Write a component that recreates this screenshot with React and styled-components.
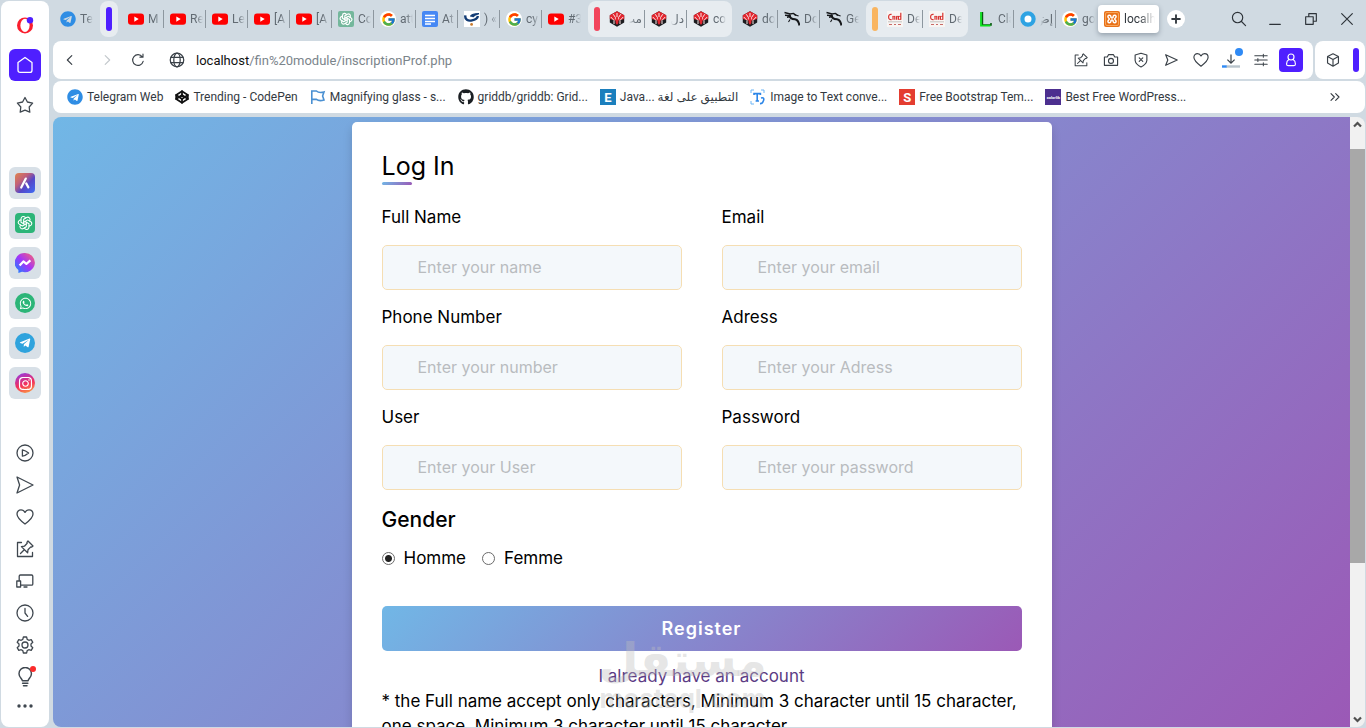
import React, { useState } from 'react';
import styled, { createGlobalStyle } from 'styled-components';
import { FaTelegram, FaTelegramPlane, FaGithub, FaWhatsapp, FaInstagram } from 'react-icons/fa';
import { FcGoogle } from 'react-icons/fc';
import { TbBrandOpenai } from 'react-icons/tb';
import { FiCodepen } from 'react-icons/fi';

const GlobalStyle = createGlobalStyle`
  * {
    box-sizing: border-box;
  }

  body {
    margin: 0;
    font-family: Roboto, 'DejaVu Sans', sans-serif;
    font-size: 12px;
    color: #33393f;
  }

  button {
    border: 0;
    padding: 0;
    background: none;
    color: inherit;
    font: inherit;
  }

  svg {
    display: block;
    flex: none;
  }
`;

const Browser = styled.div`
  display: flex;
  gap: 4px;
  height: 100vh;
  padding: 1px;
  background: #d0dae2;
  overflow: hidden;
`;

/* ---------- sidebar ---------- */

const Sidebar = styled.nav`
  display: flex;
  flex-direction: column;
  align-items: center;
  flex: none;
  width: 48px;
  padding: 8px 0;
  background: #fff;
  border-radius: 8px;
`;

const SideGroup = styled.div`
  display: flex;
  flex-direction: column;
  gap: ${(props) => props.$gap || 0}px;
  margin-top: ${(props) => props.$top || 0};
`;

const SideButton = styled.button`
  display: flex;
  align-items: center;
  justify-content: center;
  position: relative;
  width: 32px;
  height: ${(props) => (props.$short ? 26 : 32)}px;
  border-radius: 6px;
  background: ${(props) => props.$bg || 'transparent'};
  color: ${(props) => props.$color || '#3f474f'};
`;

const AppTile = styled.span`
  display: flex;
  align-items: center;
  justify-content: center;
  width: 20px;
  height: 20px;
  border-radius: ${(props) => (props.$round ? 10 : 4)}px;
  background: ${(props) => props.$bg};
  color: #fff;
`;

const RedDot = styled.span`
  position: absolute;
  top: 5px;
  right: 5px;
  width: 6px;
  height: 6px;
  border-radius: 3px;
  background: #fa2b2b;
`;

/* ---------- tabs ---------- */

const Main = styled.div`
  display: flex;
  flex-direction: column;
  flex: 1;
  min-width: 0;
`;

const TabStrip = styled.div`
  display: flex;
  align-items: center;
  gap: 4px;
  flex: none;
  height: 36px;
  margin-bottom: 4px;
  padding-left: 1px;
`;

const TabRun = styled.div`
  display: flex;
  align-items: center;
`;

const TabGroup = styled.div`
  display: flex;
  align-items: center;
  height: 36px;
  padding: 0 ${(props) => (props.$closed ? 6 : 3)}px 0 6px;
  gap: 3px;
  border-radius: 8px;
  background: #e7ecf0;
`;

const GroupMark = styled.span`
  width: 6px;
  height: 24px;
  border-radius: 3px;
  background: ${(props) => props.$color};
`;

const TabButton = styled.button`
  display: flex;
  align-items: center;
  gap: 4px;
  width: 42px;
  height: 18px;
  padding-left: 6px;
  border-right: 1px solid ${(props) => (props.$last ? 'transparent' : '#8d979f')};
  color: #626b73;
`;

const ActiveTab = styled(TabButton)`
  width: 61px;
  height: 28px;
  padding-right: 2px;
  border: 0;
  border-radius: 4px;
  background: #fff;
  color: #33393f;
  box-shadow: 0 2px 5px rgba(60, 75, 90, 0.4);
`;

const TabText = styled.span`
  flex: 1;
  min-width: 0;
  overflow: hidden;
  white-space: nowrap;
  text-align: left;
  line-height: 18px;
  direction: ${(props) => (props.$rtl ? 'rtl' : 'ltr')};
  margin-right: 2px;
  mask-image: linear-gradient(
    to ${(props) => (props.$rtl ? 'left' : 'right')},
    #000 50%,
    transparent
  );
`;

const GoogleDisc = styled.span`
  display: flex;
  align-items: center;
  justify-content: center;
  width: 16px;
  height: 16px;
  flex: none;
  border-radius: 8px;
  background: #fff;
`;

const GreenTile = styled(AppTile)`
  width: 16px;
  height: 16px;
  flex: none;
  border-radius: 2px;
`;

const NewTab = styled.button`
  display: flex;
  align-items: center;
  justify-content: center;
  width: 18px;
  height: 18px;
  margin-left: 4px;
  border-radius: 9px;
  background: #fff;
`;

const WindowButtons = styled.div`
  display: flex;
  margin-left: auto;
`;

const WindowButton = styled.button`
  display: flex;
  align-items: center;
  justify-content: center;
  width: 36px;
  height: 36px;
  color: #2d3339;
`;

/* ---------- address bar ---------- */

const BarRow = styled.div`
  display: flex;
  gap: 2px;
  flex: none;
  height: 38px;
  margin-bottom: 2px;
`;

const AddressBar = styled.div`
  display: flex;
  align-items: center;
  flex: 1;
  min-width: 0;
  padding: 0 7px 0 2px;
  background: #fff;
  border-radius: 8px;
`;

const BarButton = styled.button`
  display: flex;
  align-items: center;
  justify-content: center;
  position: relative;
  flex: none;
  width: ${(props) => props.$w || 30}px;
  height: 30px;
  color: ${(props) => props.$color || '#3a4148'};
`;

const AddressBox = styled.div`
  display: flex;
  align-items: center;
  flex: 1;
  min-width: 0;
  gap: 4px;
  margin-left: 15px;
`;

const Url = styled.div`
  flex: 1;
  font-size: 13px;
  color: #7b848b;
  white-space: nowrap;
  overflow: hidden;

  b {
    font-weight: 400;
    color: #111;
  }
`;

const Profile = styled.span`
  display: flex;
  align-items: center;
  justify-content: center;
  width: 24px;
  height: 24px;
  border-radius: 4px;
  background: #4f1fff;
  color: #fff;
`;

const BlueDot = styled.span`
  position: absolute;
  top: 3px;
  right: 3px;
  width: 8px;
  height: 8px;
  border-radius: 4px;
  background: #2f8af5;
`;

const SideBox = styled.div`
  display: flex;
  align-items: center;
  justify-content: space-between;
  width: 50px;
  padding: 0 6px 0 3px;
  background: #fff;
  border-radius: 8px;
`;

/* ---------- bookmarks ---------- */

const Bookmarks = styled.div`
  display: flex;
  align-items: center;
  gap: 12px;
  flex: none;
  height: 32px;
  margin-bottom: 4px;
  padding: 0 24px 0 14px;
  background: #fff;
  border-radius: 8px;
`;

const Bookmark = styled.a`
  display: flex;
  align-items: center;
  gap: 4px;
  color: #33393f;
  text-decoration: none;
  white-space: nowrap;
`;

const LetterTile = styled.span`
  display: flex;
  align-items: center;
  justify-content: center;
  width: 16px;
  height: 16px;
  background: ${(props) => props.$bg};
  color: #fff;
  font-size: ${(props) => (props.$tiny ? 4 : 13)}px;
  font-weight: 700;
`;

const More = styled.button`
  margin-left: auto;
`;

/* ---------- page ---------- */

const Viewport = styled.div`
  display: flex;
  flex: 1;
  min-height: 0;
  border-radius: 8px;
  overflow: hidden;
`;

const Page = styled.main`
  flex: 1;
  padding: 5px 10px;
  overflow: hidden;
  background: linear-gradient(135deg, #71b7e6, #9b59b6);
  font-family: Inter, 'Open Sans', sans-serif;
  color: #000;
`;

const Card = styled.div`
  position: relative;
  max-width: 700px;
  margin: 0 auto;
  padding: 25px 30px;
  background: #fff;
  border-radius: 5px;
  box-shadow: 0 5px 10px rgba(0, 0, 0, 0.15);
`;

const Title = styled.h1`
  position: relative;
  margin: 0 0 20px;
  font-size: 25px;
  font-weight: 400;
  line-height: 38px;

  &::before {
    content: '';
    position: absolute;
    left: 0;
    bottom: 0;
    width: 30px;
    height: 3px;
    border-radius: 5px;
    background: linear-gradient(135deg, #71b7e6, #9b59b6);
  }
`;

const Fields = styled.div`
  display: grid;
  grid-template-columns: 1fr 1fr;
  gap: 15px 40px;
`;

const Field = styled.div`
  label {
    display: block;
    margin-bottom: 16px;
    font-size: 17px;
    font-weight: 400;
    line-height: 24px;
  }

  input {
    display: block;
    width: 100%;
    height: 45px;
    padding: 0 15px 2px 35px;
    border: 1px solid #f5deb3;
    border-radius: 5px;
    outline: none;
    background: #f4f8fb;
    font-family: inherit;
    font-size: 16px;
  }

  input::placeholder {
    color: #b9bcbf;
    opacity: 1;
  }
`;

const Gender = styled.fieldset`
  margin: 15px 0 0;
  padding: 0;
  border: 0;

  legend {
    padding: 0;
    font-size: 21px;
    font-weight: 500;
    line-height: 30px;
  }
`;

const Radios = styled.div`
  display: flex;
  gap: 16px;
  margin-top: 11px;

  label {
    display: flex;
    align-items: center;
    gap: 9px;
    font-size: 17px;
    line-height: 24px;
  }

  input {
    width: 13px;
    height: 13px;
    margin: 0;
    appearance: none;
    border: 1px solid #6b6b6b;
    border-radius: 7px;
    background: #fff;
  }

  input:checked {
    background: radial-gradient(circle, #222 0 3px, #fff 4px);
  }
`;

const Register = styled.button`
  display: block;
  width: 100%;
  height: 45px;
  margin: 36px 0 13px;
  border-radius: 5px;
  background: linear-gradient(135deg, #71b7e6, #9b59b6);
  color: #fff;
  font-size: 18px;
  font-weight: 600;
  letter-spacing: 1px;
`;

const LoginLink = styled.a`
  display: block;
  text-align: center;
  font-size: 17px;
  line-height: 25px;
  color: #5b3b84;
  text-decoration: none;
`;

const Rules = styled.p`
  margin: 0;
  font-size: 17px;
  line-height: 25px;
`;

const Watermark = styled.div`
  position: absolute;
  top: 510px;
  left: 0;
  right: 0;
  padding-right: 38px;
  text-align: center;
  font-weight: 700;
  color: rgba(190, 190, 190, 0.4);
  pointer-events: none;

  strong {
    display: block;
    font-family: 'DejaVu Sans', sans-serif;
    font-size: 46px;
    line-height: 56px;
  }

  span {
    display: block;
    font-size: 26px;
    line-height: 22px;
  }
`;

const ScrollBar = styled.div`
  display: flex;
  flex-direction: column;
  align-items: center;
  width: 15px;
  padding: 4px 0;
  background: #f1f1f1;
  color: #505050;
`;

const ScrollTrack = styled.div`
  flex: 1;
  width: 100%;
  padding-top: 21px;
`;

const ScrollThumb = styled.div`
  height: 73%;
  background: #a8a8a8;
`;

/* ---------- icons ---------- */

const Line = ({ size = 18, sw = 1.3, children }) => (
  <svg
    width={size}
    height={size}
    viewBox="0 0 18 18"
    fill="none"
    stroke="currentColor"
    strokeWidth={sw}
    strokeLinecap="round"
    strokeLinejoin="round"
    aria-hidden="true"
  >
    {children}
  </svg>
);

const heartPath = 'M9 16 C5.5 13.4 1 10 1 6 C1 3.4 2.8 1.8 5 1.8 C6.8 1.8 8.2 2.8 9 4.4 C9.8 2.8 11.2 1.8 13 1.8 C15.2 1.8 17 3.4 17 6 C17 10 12.5 13.4 9 16 Z';

const PinIcon = ({ size }) => (
  <Line size={size}>
    <path d="M5.5 2.5H1.5V16.5H16.5V12.5M4.5 13.5L8 10M12 1L17 6L15.5 7.2L14.8 6.9L12 9.8L11.6 12.8L5.4 6.6L8.4 6.2L11.2 3.3L10.9 2.4Z" />
  </Line>
);

const HeartIcon = ({ size }) => (
  <Line size={size}>
    <path d={heartPath} />
  </Line>
);

const OperaIcon = () => (
  <svg width="18" height="18" viewBox="0 0 18 18" aria-hidden="true">
    <circle cx="9" cy="9.4" r="8" fill="#fa1e2d" />
    <ellipse cx="9" cy="9.4" rx="4.6" ry="6.6" fill="#fff" />
    <circle cx="14" cy="4.2" r="3.2" fill="#4f1fff" />
  </svg>
);

const YoutubeIcon = () => (
  <svg width="16" height="16" viewBox="0 0 16 16" aria-hidden="true">
    <rect y="2.4" width="16" height="11.4" rx="3" fill="#f00" />
    <path d="M6.3 5.5L10.7 8.1L6.3 10.7Z" fill="#fff" />
  </svg>
);

const GoogleIcon = () => (
  <GoogleDisc>
    <FcGoogle size={15} />
  </GoogleDisc>
);

const OpenaiIcon = () => (
  <GreenTile $bg="#74b79c">
    <TbBrandOpenai size={14} />
  </GreenTile>
);

const DocsIcon = () => (
  <svg width="16" height="16" viewBox="0 0 16 16" aria-hidden="true">
    <rect width="16" height="16" rx="2" fill="#4688f4" />
    <path d="M3 4.5H13M3 7.5H13M3 10.5H13M3 13H9" stroke="#fff" strokeWidth="1.3" />
  </svg>
);

const BubbleIcon = () => (
  <svg width="16" height="16" viewBox="0 0 16 16" aria-hidden="true">
    <rect width="16" height="16" fill="#fff" />
    <path d="M1.4 4.4C.6 8.6 4 10.2 8 9.4C11.4 8.8 13.4 7.2 14 5" fill="none" stroke="#123c75" strokeWidth="2.4" />
    <path d="M6.4 5.4C7.4 3.6 10 2.6 15 2.6C12 3.4 10 4.6 8.6 6" stroke="#123c75" strokeWidth="1.2" fill="#123c75" />
    <circle cx="7.6" cy="13.4" r="1.4" fill="#c8792c" />
  </svg>
);

const SpiderIcon = () => (
  <svg width="16" height="16" viewBox="0 0 16 16" aria-hidden="true">
    <path d="M8 .3L15.2 4.2V11.6L8 15.7L.8 11.6V4.2Z" fill="#1c1c1f" />
    <path d="M8 .3L15.2 4.2V8L8 10L.8 8V4.2Z" fill="#e3262f" />
    <path d="M4.2 3.2L6.4 6.4V8.6M11.8 3.2L9.6 6.4V8.6M8 2V6M1.8 6L5 9.4V13M14.2 6L11 9.4V13" stroke="#fbe6e6" strokeWidth="1" fill="none" />
    <path d="M6.6 7.4H9.4V12L8 14L6.6 12Z" fill="#e3262f" />
  </svg>
);

const DragonIcon = () => (
  <svg width="16" height="16" viewBox="0 0 16 16" fill="none" stroke="#15171a" aria-hidden="true">
    <path d="M.5 1.5L6 3L9.5 2.4L12 4.4M1 4.2L6 4.6M3 6.2L7 5.4" strokeWidth="1.4" />
    <path d="M6 3.6C5 7 8 8 11 8.3C14 8.6 14.6 11 15.5 14.5" strokeWidth="2" />
    <path d="M6 8.5L4.5 11M10 3.4L14.6 5" strokeWidth="1.1" />
  </svg>
);

const CanadaIcon = () => (
  <svg width="16" height="16" viewBox="0 0 16 16" aria-hidden="true">
    <rect width="16" height="16" fill="#f8f5f3" />
    <path d="M4.6 3.4Q1.6 3 1.6 6T4.6 8.6M6 5.2V8.8M7.8 5V8.8M9.6 5.2V8.8M11.4 5V8.8M13.8 1.8V8.8" stroke="#d8322f" strokeWidth="1.2" fill="none" />
    <path d="M5.4 5.4H8M9.2 5.4H14M11.4 8.4H14" stroke="#d8322f" strokeWidth=".8" />
    <path d="M1 10.8H15" stroke="#b9b5b3" strokeWidth=".8" />
    <path d="M2 13.5H5M7 13.5H9M11 13.5H14" stroke="#c96a66" />
  </svg>
);

const GreenLIcon = () => (
  <svg width="16" height="16" viewBox="0 0 16 16" fill="none" aria-hidden="true">
    <path d="M4.4 1V14H13V12" stroke="#0a5a12" strokeWidth="1.6" />
    <path d="M3 1V14.6H12.4" stroke="#0be01c" strokeWidth="1.8" />
  </svg>
);

const RingIcon = () => (
  <svg width="16" height="16" viewBox="0 0 16 16" aria-hidden="true">
    <circle cx="8" cy="8" r="5.6" fill="#fff" stroke="#2ea3e3" strokeWidth="4.2" />
  </svg>
);

const XamppIcon = () => (
  <svg width="16" height="16" viewBox="0 0 16 16" aria-hidden="true">
    <rect width="16" height="16" rx="2" fill="#e8711a" />
    <rect x="1.5" y="1.5" width="13" height="13" rx="1.5" fill="none" stroke="#fbb56b" strokeWidth=".8" />
    <path d="M5 4.3Q3 5 4.6 7Q6 8 4.6 9Q3 11 5 11.7Q7 12 7 9.5Q8 8.6 9 9.5Q9 12 11 11.7Q13 11 11.4 9Q10 8 11.4 7Q13 5 11 4.3Q9 4 9 6.5Q8 7.4 7 6.5Q7 4 5 4.3Z" fill="none" stroke="#fff" strokeWidth="1.5" />
  </svg>
);

const FlagIcon = () => (
  <svg width="16" height="16" viewBox="0 0 16 16" fill="none" stroke="#4a90d2" strokeWidth="1.6" aria-hidden="true">
    <path d="M1.8 15V2H6.4Q9 4.4 14 3L12.6 7L14 11Q9 12.4 6.4 10.4H1.8" />
  </svg>
);

const ScanTextIcon = () => (
  <svg width="16" height="16" viewBox="0 0 16 16" fill="none" stroke="#2c86e8" aria-hidden="true">
    <path d="M1 4V1H4M11 1H14V4M1 12V15H4" stroke="#6db5f5" />
    <path d="M4 6V4.6H10.4V6M7.2 4.6V12M5.6 12H9" strokeWidth="1.6" />
    <path d="M11 9Q14.5 8 13.6 11.4T10 14.6" strokeWidth="1.6" />
  </svg>
);

const AriaIcon = () => (
  <svg width="20" height="20" viewBox="0 0 20 20" aria-hidden="true">
    <defs>
      <linearGradient id="aria" x1="0" y1="0" x2="1" y2="1">
        <stop offset="0" stopColor="#e0844c" />
        <stop offset=".35" stopColor="#c0607a" />
        <stop offset=".6" stopColor="#5548c8" />
        <stop offset="1" stopColor="#3e6df5" />
      </linearGradient>
    </defs>
    <rect width="20" height="20" rx="4" fill="url(#aria)" />
    <path d="M10.8 5.6L6.2 14.6M11.2 10.4L13.4 14.4" stroke="#fff" strokeWidth="2.2" strokeLinecap="round" />
  </svg>
);

const MessengerIcon = () => (
  <svg width="20" height="20" viewBox="0 0 20 20" aria-hidden="true">
    <defs>
      <linearGradient id="messenger" x1="1" y1="0" x2="0" y2="1">
        <stop offset="0" stopColor="#ff6968" />
        <stop offset=".5" stopColor="#a334fa" />
        <stop offset="1" stopColor="#0a8dff" />
      </linearGradient>
    </defs>
    <path d="M10 0A10 9.6 0 1 1 7 18.8L3.4 20V17A10 9.6 0 0 1 10 0Z" fill="url(#messenger)" />
    <path d="M4.6 12.6L8.4 8.4L11.4 10.8L15.4 7.4" fill="none" stroke="#fff" strokeWidth="2.2" strokeLinejoin="round" />
  </svg>
);

const ArrowIcon = ({ down }) => (
  <svg width="9" height="7" viewBox="0 0 9 7" fill="none" stroke="currentColor" strokeWidth="2.2" aria-hidden="true">
    <path d={down ? 'M1 1.5L4.5 5L8 1.5' : 'M1 5.5L4.5 2L8 5.5'} />
  </svg>
);

/* ---------- data ---------- */

const firstTabs = [
  [YoutubeIcon, 'M'],
  [YoutubeIcon, 'Re'],
  [YoutubeIcon, 'Le'],
  [YoutubeIcon, '[A'],
  [YoutubeIcon, '[A'],
  [OpenaiIcon, 'Co'],
  [GoogleIcon, 'att'],
  [DocsIcon, 'At'],
  [BubbleIcon, ') «'],
  [GoogleIcon, 'cy'],
  [YoutubeIcon, '#3'],
];

const redTabs = [
  [SpiderIcon, 'مب', true],
  [SpiderIcon, 'دل', true],
  [SpiderIcon, 'co'],
];

const middleTabs = [
  [SpiderIcon, 'do'],
  [DragonIcon, 'Do'],
  [DragonIcon, 'Ge'],
];

const orangeTabs = [
  [CanadaIcon, 'De'],
  [CanadaIcon, 'De'],
];

const lastTabs = [
  [GreenLIcon, 'Cla'],
  [RingIcon, 'إض', true],
  [GoogleIcon, 'go'],
];

const bookmarks = [
  [<FaTelegram size={16} color="#2f8de4" />, 'Telegram Web'],
  [<FiCodepen size={14} color="#111" strokeWidth={3} />, 'Trending - CodePen'],
  [<FlagIcon />, 'Magnifying glass - s...'],
  [<FaGithub size={16} color="#1b1f23" />, 'griddb/griddb: Grid...'],
  [<LetterTile $bg="#1b7fbd">E</LetterTile>, 'Java... التطبيق على لغة'],
  [<ScanTextIcon />, 'Image to Text conve...'],
  [<LetterTile $bg="#e43d30">S</LetterTile>, 'Free Bootstrap Tem...'],
  [<LetterTile $bg="#4c2f8f" $tiny>colorlib</LetterTile>, 'Best Free WordPress...'],
];

const fields = [
  { id: 'name', label: 'Full Name', hint: 'Enter your name' },
  { id: 'email', label: 'Email', hint: 'Enter your email' },
  { id: 'phone', label: 'Phone Number', hint: 'Enter your number' },
  { id: 'adress', label: 'Adress', hint: 'Enter your Adress' },
  { id: 'user', label: 'User', hint: 'Enter your User' },
  { id: 'password', label: 'Password', hint: 'Enter your password', type: 'password' },
];

const Tabs = ({ items }) =>
  items.map(([Icon, text, rtl], i) => (
    <TabButton key={i} $last={i === items.length - 1}>
      <Icon />
      <TabText $rtl={rtl}>{text}</TabText>
    </TabButton>
  ));

function SideNav() {
  return (
    <Sidebar>
      <SideGroup $gap={8}>
        <SideButton aria-label="Menu">
          <OperaIcon />
        </SideButton>
        <SideButton $bg="#4f1fff" $color="#fff" aria-label="Home">
          <Line>
            <path d="M9 1.4L16 6.6V14.2Q16 16.4 13.8 16.4H4.2Q2 16.4 2 14.2V6.6Z" />
          </Line>
        </SideButton>
        <SideButton aria-label="Speed dial">
          <Line>
            <path d="M9 1.5L11.4 6L16.6 7.1L13.2 11L13.8 16.2L9 14.2L4.2 16.2L4.8 11L1.4 7.1L6.6 6Z" />
          </Line>
        </SideButton>
      </SideGroup>

      <SideGroup $gap={8} $top="46px">
        <SideButton $bg="#d8e0e7" aria-label="Aria">
          <AriaIcon />
        </SideButton>
        <SideButton $bg="#d8e0e7" aria-label="ChatGPT">
          <AppTile $bg="#2cb578">
            <TbBrandOpenai size={16} strokeWidth={1.6} />
          </AppTile>
        </SideButton>
        <SideButton $bg="#d8e0e7" aria-label="Messenger">
          <MessengerIcon />
        </SideButton>
        <SideButton $bg="#d8e0e7" aria-label="WhatsApp">
          <AppTile $bg="#2cb578" $round>
            <FaWhatsapp size={13} />
          </AppTile>
        </SideButton>
        <SideButton $bg="#d8e0e7" aria-label="Telegram">
          <AppTile $bg="#2fa3dd" $round>
            <FaTelegramPlane size={12} />
          </AppTile>
        </SideButton>
        <SideButton $bg="#d8e0e7" aria-label="Instagram">
          <AppTile $bg="linear-gradient(160deg, #8a3af0, #f42f5b 55%, #fbb040)" $round>
            <FaInstagram size={15} />
          </AppTile>
        </SideButton>
      </SideGroup>

      <SideGroup $top="auto">
        <SideButton aria-label="Player">
          <Line>
            <circle cx="9" cy="9" r="8" />
            <path d="M6.4 5.8Q9.6 6.4 12.6 9Q9.6 11.6 6.4 12.2Z" />
          </Line>
        </SideButton>
        <SideButton aria-label="Flow">
          <Line>
            <path d="M1 1L17 9L1 17L3.6 9Z" />
          </Line>
        </SideButton>
        <SideButton aria-label="Likes">
          <HeartIcon />
        </SideButton>
        <SideButton aria-label="Pinboards">
          <PinIcon />
        </SideButton>
        <SideButton aria-label="Devices">
          <Line>
            <path d="M3.2 8V4.2Q3.2 3 4.4 3H15.6Q16.8 3 16.8 4.2V12Q16.8 13.2 15.6 13.2H5M8 15H11M.8 9H4.6V15H.8Z" />
          </Line>
        </SideButton>
        <SideButton aria-label="History">
          <Line>
            <circle cx="9" cy="9" r="8" />
            <path d="M9 4.4V9L11.6 12.4" />
          </Line>
        </SideButton>
        <SideButton aria-label="Settings">
          <Line>
            <circle cx="9" cy="9" r="3" />
            <path d="M7.4 1H10.6L11.2 3.4L12.8 4.3L15.2 3.6L16.8 6.3L15 8V10L16.8 11.7L15.2 14.4L12.8 13.7L11.2 14.6L10.6 17H7.4L6.8 14.6L5.2 13.7L2.8 14.4L1.2 11.7L3 10V8L1.2 6.3L2.8 3.6L5.2 4.3L6.8 3.4Z" />
          </Line>
        </SideButton>
        <SideButton aria-label="Tips">
          <Line size={20}>
            <path d="M6.6 12.4C6.4 10.4 3.6 9.4 3.6 6A5.6 5.6 0 0 1 14.8 6C14.8 9.4 12 10.4 11.8 12.4ZM6.8 14.6H11.6M7.6 16.8H10.8" />
          </Line>
          <RedDot />
        </SideButton>
        <SideButton $short aria-label="More">
          <svg width="16" height="4" viewBox="0 0 16 4" fill="currentColor" aria-hidden="true">
            <circle cx="2" cy="2" r="1.7" />
            <circle cx="8" cy="2" r="1.7" />
            <circle cx="14" cy="2" r="1.7" />
          </svg>
        </SideButton>
      </SideGroup>
    </Sidebar>
  );
}

function TabBar() {
  return (
    <TabStrip>
      <TabRun>
        <Tabs items={[[() => <FaTelegram size={16} color="#2f8de4" />, 'Tel']]} />
      </TabRun>
      <TabGroup $closed>
        <GroupMark $color="#4f1fff" />
      </TabGroup>
      <TabRun>
        <Tabs items={firstTabs} />
      </TabRun>
      <TabGroup>
        <GroupMark $color="#f2455c" />
        <TabRun>
          <Tabs items={redTabs} />
        </TabRun>
      </TabGroup>
      <TabRun>
        <Tabs items={middleTabs} />
      </TabRun>
      <TabGroup>
        <GroupMark $color="#f9b560" />
        <TabRun>
          <Tabs items={orangeTabs} />
        </TabRun>
      </TabGroup>
      <TabRun>
        <Tabs items={lastTabs} />
        <ActiveTab>
          <XamppIcon />
          <TabText>localhost</TabText>
        </ActiveTab>
      </TabRun>
      <NewTab aria-label="New tab">
        <Line size={14} sw={2.4}>
          <path d="M9 4V14M4 9H14" />
        </Line>
      </NewTab>
      <WindowButtons>
        <WindowButton aria-label="Search tabs">
          <Line size={16}>
            <circle cx="7.4" cy="7.4" r="5.8" />
            <path d="M11.8 11.8L16.4 16.4" />
          </Line>
        </WindowButton>
        <WindowButton aria-label="Minimize">
          <Line size={16}>
            <path d="M3 15H15" />
          </Line>
        </WindowButton>
        <WindowButton aria-label="Restore">
          <Line size={16}>
            <path d="M3 6.5H11.5V15H3ZM6.5 6V3H15V11.5H12" />
          </Line>
        </WindowButton>
        <WindowButton aria-label="Close">
          <Line size={16}>
            <path d="M3 3L15 15M15 3L3 15" />
          </Line>
        </WindowButton>
      </WindowButtons>
    </TabStrip>
  );
}

function Toolbar() {
  return (
    <BarRow>
      <AddressBar>
        <BarButton aria-label="Back">
          <Line size={16}>
            <path d="M11 4L6 9L11 14" />
          </Line>
        </BarButton>
        <BarButton $w={44} $color="#c3c8cc" aria-label="Forward">
          <Line size={16}>
            <path d="M7 4L12 9L7 14" />
          </Line>
        </BarButton>
        <BarButton $w={18} aria-label="Reload">
          <Line size={16}>
            <path d="M14.8 10.6A6 6 0 1 1 13.8 5.4M14.6 2.4V5.8H11.2" />
          </Line>
        </BarButton>
        <AddressBox>
          <BarButton aria-label="Site information">
            <Line size={16} sw={1.4}>
              <circle cx="9" cy="9" r="7.6" />
              <ellipse cx="9" cy="9" rx="3.6" ry="7.6" />
              <path d="M2.2 6H15.8M2.2 12H15.8" />
            </Line>
          </BarButton>
          <Url>
            <b>localhost</b>/fin%20module/inscriptionProf.php
          </Url>
        </AddressBox>
        <BarButton aria-label="Pinboard">
          <PinIcon size={14} />
        </BarButton>
        <BarButton aria-label="Snapshot">
          <Line size={16}>
            <path d="M1.6 5.6H4.8L6.2 3H11.8L13.2 5.6H16.4V15H1.6Z" />
            <circle cx="9" cy="10" r="2.8" />
          </Line>
        </BarButton>
        <BarButton aria-label="Ad blocker">
          <Line size={16}>
            <path d="M9 1.4L15.6 3.4V9.6Q15 14 9 16.8Q3 14 2.4 9.6V3.4ZM7 6.6L11 10.6M11 6.6L7 10.6" />
          </Line>
        </BarButton>
        <BarButton aria-label="Send">
          <Line size={16}>
            <path d="M3 3L16 9L3 15L5.4 9Z" />
          </Line>
        </BarButton>
        <BarButton aria-label="Favourite">
          <HeartIcon size={16} />
        </BarButton>
        <BarButton aria-label="Downloads">
          <svg width="18" height="18" viewBox="0 0 18 18" fill="none" stroke="currentColor" aria-hidden="true">
            <path d="M9 3.5V12M5.4 8.6L9 12.2L12.6 8.6" strokeWidth="1.2" />
            <path d="M4 15.5H18" stroke="#b9c4cc" strokeWidth="2.4" />
            <path d="M0 15.5H4.6" stroke="#2f8af5" strokeWidth="2.4" />
          </svg>
          <BlueDot />
        </BarButton>
        <BarButton aria-label="Easy setup">
          <Line size={14}>
            <path d="M1 3.5H17M1 9H17M1 14.5H17M12 1.6V5.4M5 7V11M12 12.6V16.4" />
          </Line>
        </BarButton>
        <BarButton aria-label="Profile">
          <Profile>
            <Line size={16}>
              <circle cx="9" cy="5.6" r="3.4" />
              <path d="M6.6 8.4Q4 10 4 13.4Q4 15.4 6 15.4H12Q14 15.4 14 13.4Q14 10 11.4 8.4" />
            </Line>
          </Profile>
        </BarButton>
      </AddressBar>
      <SideBox>
        <BarButton aria-label="Extensions">
          <Line size={14} sw={1.5}>
            <path d="M9 1L16 4.6V13L9 17L2 13V4.6ZM2 4.6L9 8.4L16 4.6M9 8.4V17" />
          </Line>
        </BarButton>
        <GroupMark $color="#4f1fff" />
      </SideBox>
    </BarRow>
  );
}

function RegisterForm() {
  const [gender, setGender] = useState('Homme');

  return (
    <Card>
      <Title>Log In</Title>
      <form onSubmit={(e) => e.preventDefault()}>
        <Fields>
          {fields.map((f) => (
            <Field key={f.id}>
              <label htmlFor={f.id}>{f.label}</label>
              <input id={f.id} type={f.type || 'text'} placeholder={f.hint} />
            </Field>
          ))}
        </Fields>
        <Gender>
          <legend>Gender</legend>
          <Radios>
            {['Homme', 'Femme'].map((g) => (
              <label key={g}>
                <input
                  type="radio"
                  name="gender"
                  checked={gender === g}
                  onChange={() => setGender(g)}
                />
                {g}
              </label>
            ))}
          </Radios>
        </Gender>
        <Register>Register</Register>
      </form>
      <LoginLink href="#login">I already have an account</LoginLink>
      <Rules>
        * the Full name accept only characters, Minimum 3 character until 15 character, one space,
        Minimum 3 character until 15 character
      </Rules>
      <Watermark>
        <strong>مستقل</strong>
        <span>mostaql.com</span>
      </Watermark>
    </Card>
  );
}

function App() {
  return (
    <>
      <GlobalStyle />
      <Browser>
        <SideNav />
        <Main>
          <TabBar />
          <Toolbar />
          <Bookmarks>
            {bookmarks.map(([icon, text]) => (
              <Bookmark key={text} href="#bookmark">
                {icon}
                <span>{text}</span>
              </Bookmark>
            ))}
            <More aria-label="More bookmarks">
              <Line size={12} sw={1.6}>
                <path d="M3 4L8 9L3 14M10 4L15 9L10 14" />
              </Line>
            </More>
          </Bookmarks>
          <Viewport>
            <Page>
              <RegisterForm />
            </Page>
            <ScrollBar>
              <ArrowIcon />
              <ScrollTrack>
                <ScrollThumb />
              </ScrollTrack>
              <ArrowIcon down />
            </ScrollBar>
          </Viewport>
        </Main>
      </Browser>
    </>
  );
}

export default App;
